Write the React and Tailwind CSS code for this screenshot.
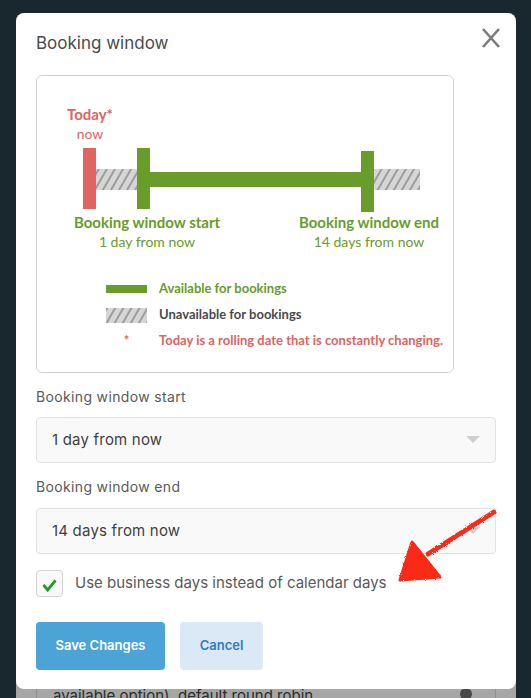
import React from 'react';

const ui = { fontFamily: 'Inter, "Noto Sans", sans-serif' };
const lato = { fontFamily: 'Lato, "Noto Sans", sans-serif' };

function Hatch({ id, w, h }) {
  return (
    <svg width={w} height={h} className="block">
      <defs>
        <pattern id={id} width="7" height="7" patternUnits="userSpaceOnUse" patternTransform="rotate(30)">
          <rect width="7" height="7" fill="#d6d6d6" />
          <rect width="2" height="7" fill="#9d9d9d" />
        </pattern>
      </defs>
      <rect width={w} height={h} fill={`url(#${id})`} />
    </svg>
  );
}

function Timeline() {
  return (
    <svg width="416" height="64" className="block mt-[4px]">
      <defs>
        <pattern id="hatch-bar" width="7" height="7" patternUnits="userSpaceOnUse" patternTransform="rotate(30)">
          <rect width="7" height="7" fill="#d6d6d6" />
          <rect width="2" height="7" fill="#9d9d9d" />
        </pattern>
      </defs>
      <rect x="59" y="21" width="41" height="21" fill="url(#hatch-bar)" />
      <rect x="337" y="21" width="46" height="21" fill="url(#hatch-bar)" />
      <rect x="46" y="0" width="13" height="61" fill="#e0645f" />
      <rect x="113" y="24" width="211" height="15" fill="#689d2a" />
      <rect x="100" y="0" width="13" height="61" fill="#689d2a" />
      <rect x="324" y="3" width="13" height="61" fill="#689d2a" />
    </svg>
  );
}

function Diagram() {
  return (
    <div className="w-[418px] rounded-[6px] border border-[#d2d2d2] pt-[28px] pb-[22px]" style={lato}>
      <div className="ml-[23px] w-[60px] text-center leading-[20px] text-[#e0645f]">
        <div className="text-[15px] font-bold">Today*</div>
        <div className="text-[14px]">now</div>
      </div>
      <Timeline />
      <div className="flex text-center leading-[20px] text-[#689d2a]">
        <div className="ml-[30px] w-[160px]">
          <div className="text-[15px] font-bold">Booking window start</div>
          <div className="text-[14px]">1 day from now</div>
        </div>
        <div className="ml-[62px] w-[160px]">
          <div className="text-[15px] font-bold">Booking window end</div>
          <div className="text-[14px]">14 days from now</div>
        </div>
      </div>
      <div className="ml-[69px] mt-[28px] flex flex-col gap-[8px] text-[13px] font-bold">
        <div className="flex h-[18px] items-center gap-[12px]">
          <div className="h-[8px] w-[41px] bg-[#689d2a]" />
          <span className="text-[#689d2a]">Available for bookings</span>
        </div>
        <div className="flex h-[18px] items-center gap-[12px]">
          <Hatch id="hatch-legend" w={41} h={15} />
          <span className="text-[#4a4a4a]">Unavailable for bookings</span>
        </div>
        <div className="flex h-[18px] items-center gap-[12px] text-[#e0645f]">
          <span className="w-[41px] text-center text-[13px]">*</span>
          <span>Today is a rolling date that is constantly changing.</span>
        </div>
      </div>
    </div>
  );
}

function Select({ value }) {
  return (
    <div className="flex h-[46px] items-center justify-between rounded-[4px] border border-[#e2e2e2] bg-[#f9f9f9] pl-[15px] pr-[15px]">
      <span className="text-[15px] tracking-[0.2px] text-[#3f3f3f]">{value}</span>
      <svg width="14" height="8" viewBox="0 0 14 8">
        <path d="M0 0 H14 L7 7 Z" fill="#cfcfcf" />
      </svg>
    </div>
  );
}

function Arrow() {
  return (
    <svg className="absolute left-[390px] top-[500px] z-20" width="120" height="95" viewBox="390 500 120 95">
      <defs>
        <filter id="rough">
          <feTurbulence type="fractalNoise" baseFrequency="0.9" numOctaves="2" result="n" />
          <feDisplacementMap in="SourceGraphic" in2="n" scale="3" />
        </filter>
      </defs>
      <g filter="url(#rough)" fill="#fb2a16" stroke="#fb2a16">
        <path d="M494 512 L428 554" strokeWidth="5" strokeLinecap="round" fill="none" />
        <path d="M412 542 L400 580 L440 577 Z" strokeWidth="3" strokeLinejoin="round" />
      </g>
    </svg>
  );
}

export default function App() {
  return (
    <div className="relative h-[698px] w-full overflow-hidden bg-[#19272f]" style={ui}>
      <div className="relative z-10 ml-[16px] mt-[13px] w-[500px] rounded-[8px] bg-white px-[20px] pt-[18px] pb-[19px]">
        <div className="flex items-start justify-between">
          <h1 className="text-[17px] leading-[24px] text-[#4a4a4a]">Booking window</h1>
          <svg width="20" height="20" viewBox="0 0 20 20" className="-mr-[5px] -mt-[3px]">
            <path d="M2 1 L18 19 M18 1 L2 19" stroke="#7b7b7b" strokeWidth="2.6" />
          </svg>
        </div>
        <div className="mt-[20px]">
          <Diagram />
        </div>
        <div className="mt-[14px] text-[14px] leading-[20px] tracking-[0.35px] text-[#5a5a5a]">Booking window start</div>
        <div className="mt-[10px]">
          <Select value="1 day from now" />
        </div>
        <div className="mt-[14px] text-[14px] leading-[20px] tracking-[0.35px] text-[#5a5a5a]">Booking window end</div>
        <div className="mt-[11px]">
          <Select value="14 days from now" />
        </div>
        <label className="mt-[16px] flex items-center gap-[12px]">
          <span className="flex h-[27px] w-[27px] items-center justify-center rounded-[4px] border border-[#d3d3d3] bg-[#f9f9f9]">
            <svg width="27" height="27" viewBox="0 0 27 27">
              <path d="M7 15 L11.5 20.5 L20 10" stroke="#1f9a24" strokeWidth="3" fill="none" />
            </svg>
          </span>
          <span className="text-[15px] text-[#5a5a5a]">Use business days instead of calendar days</span>
        </label>
        <div className="mt-[25px] flex gap-[15px]">
          <button className="h-[48px] w-[129px] rounded-[4px] bg-[#4ba3d6] text-[13px] font-semibold text-white">
            Save Changes
          </button>
          <button className="h-[48px] w-[83px] rounded-[4px] bg-[#dbe8f5] text-[13px] font-semibold text-[#2b7ec1]">
            Cancel
          </button>
        </div>
      </div>
      <div className="-mt-[12px] ml-[16px] h-[40px] w-[500px] bg-[#a6a6a6]">
        <div className="mx-[20px] flex h-full justify-between border-x border-[#8e8e8e] pl-[16px] pr-[23px] pt-[9px]">
          <span className="text-[15px] leading-[20px] text-[#2b2b2b]">available option), default round robin</span>
          <span className="mt-[2px] h-[12px] w-[12px] rounded-full bg-[#4a4a4a]" />
        </div>
      </div>
      <Arrow />
    </div>
  );
}
